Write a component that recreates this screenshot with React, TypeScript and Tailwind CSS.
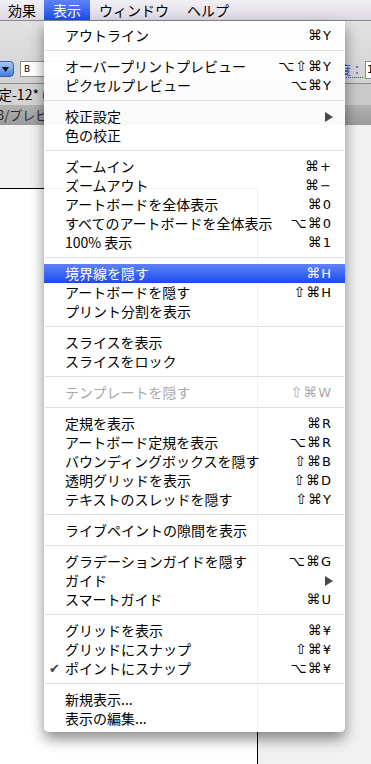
import React from "react";

type Item = {
  label: string;
  sc?: string;
  sub?: boolean;
  active?: boolean;
  disabled?: boolean;
  checked?: boolean;
};

const groups: Item[][] = [
  [{ label: "アウトライン", sc: "⌘Y" }],
  [
    { label: "オーバープリントプレビュー", sc: "⌥⇧⌘Y" },
    { label: "ピクセルプレビュー", sc: "⌥⌘Y" },
  ],
  [{ label: "校正設定", sub: true }, { label: "色の校正" }],
  [
    { label: "ズームイン", sc: "⌘+" },
    { label: "ズームアウト", sc: "⌘−" },
    { label: "アートボードを全体表示", sc: "⌘0" },
    { label: "すべてのアートボードを全体表示", sc: "⌥⌘0" },
    { label: "100% 表示", sc: "⌘1" },
  ],
  [
    { label: "境界線を隠す", sc: "⌘H", active: true },
    { label: "アートボードを隠す", sc: "⇧⌘H" },
    { label: "プリント分割を表示" },
  ],
  [{ label: "スライスを表示" }, { label: "スライスをロック" }],
  [{ label: "テンプレートを隠す", sc: "⇧⌘W", disabled: true }],
  [
    { label: "定規を表示", sc: "⌘R" },
    { label: "アートボード定規を表示", sc: "⌥⌘R" },
    { label: "バウンディングボックスを隠す", sc: "⇧⌘B" },
    { label: "透明グリッドを表示", sc: "⇧⌘D" },
    { label: "テキストのスレッドを隠す", sc: "⇧⌘Y" },
  ],
  [{ label: "ライブペイントの隙間を表示" }],
  [
    { label: "グラデーションガイドを隠す", sc: "⌥⌘G" },
    { label: "ガイド", sub: true },
    { label: "スマートガイド", sc: "⌘U" },
  ],
  [
    { label: "グリッドを表示", sc: "⌘¥" },
    { label: "グリッドにスナップ", sc: "⇧⌘¥" },
    { label: "ポイントにスナップ", sc: "⌥⌘¥", checked: true },
  ],
  [{ label: "新規表示..." }, { label: "表示の編集..." }],
];

const jp = { fontFamily: '"Noto Sans CJK JP", "DejaVu Sans", sans-serif' };
const keys = { fontFamily: '"DejaVu Sans", sans-serif' };

function Row({ item }: { item: Item }) {
  const mods = item.sc ? item.sc.slice(0, -1) : "";
  const key = item.sc ? item.sc.slice(-1) : "";
  return (
    <div
      className={`flex h-[19px] items-center pl-[5px] pr-[14px] text-[14px] leading-[19px] ${
        item.active
          ? "bg-linear-to-b from-[#5f82f6] to-[#1b49ee] text-white"
          : item.disabled
            ? "text-[#a8a8a8]"
            : "text-black"
      }`}
    >
      <span className="w-[16px] text-[13px] leading-[19px] text-[#444]" style={keys}>
        {item.checked ? "✔" : ""}
      </span>
      <span className="flex-1 whitespace-nowrap">{item.label}</span>
      {item.sc && (
        <span className="flex items-center" style={keys}>
          <span className="text-[14px] tracking-[1px]">{mods}</span>
          <span className="text-[13px]">{key}</span>
        </span>
      )}
      {item.sub && (
        <svg width="8" height="10" viewBox="0 0 8 10" className="mr-[-2px]">
          <path d="M0 0 L8 5 L0 10 Z" fill="#4a4a4a" />
        </svg>
      )}
    </div>
  );
}

export default function App() {
  return (
    <div
      className="relative flex h-[764px] w-[371px] flex-col overflow-hidden bg-[#f1f1f1]"
      style={jp}
    >
      {/* menu bar */}
      <div className="flex h-[21px] shrink-0 border-b border-[#8a8690] bg-linear-to-b from-[#f2f0f5] to-[#dcd8e3] text-[14px] leading-[20px] text-black">
        <span className="px-[8px]">効果</span>
        <span className="bg-linear-to-b from-[#5f82f6] to-[#1b49ee] px-[9px] text-white">
          表示
        </span>
        <span className="px-[9px]">ウィンドウ</span>
        <span className="px-[9px]">ヘルプ</span>
      </div>

      {/* toolbar */}
      <div className="flex h-[62px] shrink-0 items-start bg-linear-to-b from-[#e2e2e2] to-[#d2d2d2] pt-[40px]">
        <div className="ml-[-3px] flex h-[16px] w-[17px] items-center justify-center rounded-[4px] border border-[#3d5fa8] bg-linear-to-b from-[#a9c8f5] to-[#3f7fe0]">
          <svg width="7" height="5" viewBox="0 0 7 5">
            <path d="M0 0 H7 L3.5 5 Z" fill="#111" />
          </svg>
        </div>
        <div className="ml-[6px] h-[16px] w-[60px] border border-[#8e8e8e] bg-white pl-[3px] text-[9px] leading-[14px]" style={keys}>
          B
        </div>
        <div className="ml-auto mr-[-16px] flex items-center">
          <span className="border-b border-dotted border-[#3344cc] text-[12px] leading-[14px] text-[#3344cc]">
            度：
          </span>
          <div className="ml-[2px] h-[18px] w-[22px] border border-[#8e8e8e] bg-white pl-[1px] text-[11px] leading-[16px]" style={keys}>
            1
          </div>
        </div>
      </div>

      {/* document tab */}
      <div className="flex h-[22px] shrink-0 items-center border-t border-[#8a8a8a] bg-[#c9c9c9] text-[14px] leading-[20px] text-black">
        <span className="ml-[-2px] h-full bg-[#d3d3d3] pr-[4px]">定-12* (</span>
      </div>

      {/* panel title bar */}
      <div className="flex h-[20px] shrink-0 items-center bg-linear-to-b from-[#b2b2b2] to-[#9a9a9a] text-[13px] leading-[18px] text-[#2a2a2a]">
        <span className="ml-[-3px]">3/プレビ</span>
      </div>

      {/* canvas */}
      <div className="flex-1 bg-[#f1f1f1]">
        <div className="mt-[63px] h-full w-[258px] border-t border-r border-black bg-white" />
      </div>

      {/* dropdown menu */}
      <div className="absolute left-[44px] top-[21px] w-[301px] rounded-b-[5px] bg-white/95 pb-[4px] pt-[5px] shadow-[0_7px_14px_rgba(0,0,0,0.45)]">
        {groups.map((g, gi) => (
          <div key={gi}>
            {gi > 0 && (
              <div className="pb-[6px] pt-[5px] pl-[1px] pr-[1px]">
                <div className="h-px bg-[#dddddd]" />
              </div>
            )}
            {g.map((it) => (
              <Row key={it.label} item={it} />
            ))}
          </div>
        ))}
      </div>
    </div>
  );
}
